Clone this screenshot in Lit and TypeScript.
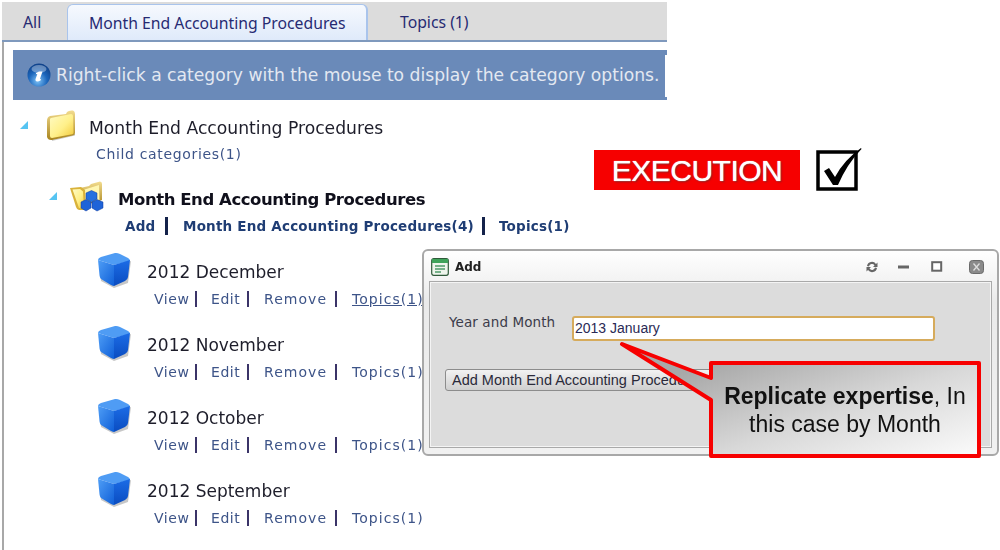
import { LitElement, html, css, svg } from "lit";
import { customElement } from "lit/decorators.js";

const defs = svg`<defs>
  <linearGradient id="cubeL" x1="0" y1="0" x2="1" y2="1"><stop offset="0" stop-color="#4f9ef6"/><stop offset="1" stop-color="#0f5fd8"/></linearGradient>
  <linearGradient id="cubeR" x1="0" y1="0" x2="0" y2="1"><stop offset="0" stop-color="#1c6ce6"/><stop offset="1" stop-color="#0a4cc0"/></linearGradient>
  <linearGradient id="fold" x1="0" y1="0" x2="1" y2="1"><stop offset="0" stop-color="#fffbc4"/><stop offset=".55" stop-color="#fff08a"/><stop offset="1" stop-color="#f2c93a"/></linearGradient>
  <linearGradient id="back" x1="0" y1="0" x2="0" y2="1"><stop offset="0" stop-color="#f3dc8e"/><stop offset="1" stop-color="#a8841e"/></linearGradient>
  <radialGradient id="orb" cx=".45" cy=".75" r=".8"><stop offset="0" stop-color="#7fc2f6"/><stop offset=".5" stop-color="#1b66bc"/><stop offset="1" stop-color="#0c3a80"/></radialGradient>
  <linearGradient id="call" gradientUnits="userSpaceOnUse" x1="96" y1="23" x2="154" y2="189"><stop offset="0" stop-color="#a8a8a8"/><stop offset=".5" stop-color="#d8d8d8"/><stop offset="1" stop-color="#fbfbfb"/></linearGradient>
</defs>`;

const cube = html`<svg class="cube" viewBox="0 0 36 36" width="36" height="36">${defs}
  <path d="M4 28 L17 35 L31 30 L34 8 L18 13 L2 9 Z" fill="#000" opacity=".22" transform="translate(1 1)"/>
  <path d="M2 8 Q2 6 5 5 L19 1 Q21 .5 24 2 L32 6 Q34 7 34 9 L18 13 Z" fill="#4f9cf4"/>
  <path d="M2 8 L18 13 L18 34 Q17 34 15 33 L5 27 Q4 26 3.6 24 Z" fill="url(#cubeL)"/>
  <path d="M18 13 L34 8 L32 25 Q32 27 29 29 L18 34 Z" fill="url(#cubeR)"/>
</svg>`;

const rows = ["2012 December", "2012 November", "2012 October", "2012 September"];

@customElement("app-root")
export class AppRoot extends LitElement {
  static styles = css`
    :host { display: block; width: 1000px; height: 550px; position: relative; overflow: hidden; background: #fff; font-family: "DejaVu Sans", sans-serif; }
    .soft { filter: blur(0.35px); width: 1000px; height: 550px; position: relative; }
    .panel { width: 665px; height: 548px; margin-left: 2px; padding-top: 2px; display: flex; flex-direction: column; }
    .tabs { display: flex; flex: none; height: 36px; background: #dcdcdc; border-bottom: 2px solid #7f99bd; padding-top: 2px; font-family: "Noto Sans", sans-serif; font-size: 15.75px; color: #262a72; }
    .tab { display: flex; align-items: center; height: 36px; }
    .all { width: 65px; padding-left: 21px; box-sizing: border-box; }
    .active { width: 301px; padding-left: 21px; box-sizing: border-box; background: linear-gradient(#f6f9fe, #dfeafa); border: 1px solid #a9c4ec; border-bottom: 0; border-right-width: 2px; border-radius: 6px 6px 0 0; }
    .topics { padding-left: 32px; }
    .body { flex: 1; border-left: 2px solid #a8a8a8; padding: 8px 0 0 9px; }
    .info { display: flex; align-items: center; gap: 5px; height: 50px; background: #6a8ab9; padding-left: 14px; box-sizing: border-box; color: #e3e8f1; font-size: 17.17px; white-space: nowrap; position: relative; overflow: hidden; }
    .info::after { content: ""; position: absolute; right: 0; top: 5px; bottom: 3px; width: 2px; background: #fff; }
    .tree { color: #1d1d2a; padding-top: 9px; }
    .row { display: flex; align-items: center; }
    .arrow { width: 0; height: 0; border-left: 8px solid transparent; border-bottom: 8px solid #56c4f2; }
    .root { padding-left: 7px; height: 32px; }
    .root .arrow { margin-right: 16px; }
    .root .title { margin-left: 13px; font-size: 17.2px; position: relative; top: 3px; }
    .sub { color: #3d5488; font-size: 14px; margin: 5px 0 0 83px; letter-spacing: .66px; }
    .cat { padding-left: 36px; height: 32px; margin-top: 18px; }
    .cat .arrow { margin-right: 12px; }
    .cat .title { margin-left: 13px; font-size: 16.5px; font-weight: 700; letter-spacing: -.44px; position: relative; top: 3px; color: #10101c; }
    .links { display: flex; align-items: center; font-size: 14px; color: #3d5488; line-height: 16px; letter-spacing: .55px; }
    .wide { letter-spacing: 1.05px; }
    .catlinks { margin: 5px 0 0 112px; font-weight: 700; color: #1f3d74; font-size: 13.5px; letter-spacing: .2px; }
    .bar { width: 2px; height: 16px; background: #3b3468; }
    .catlinks .bar { height: 18px; background: #14224a; width: 3px; }
    .items { padding-left: 83px; margin-top: 20px; }
    .item { height: 73px; }
    .item .row { height: 34px; }
    .item .title { margin-left: 15px; font-size: 17px; }
    .cube { display: block; margin-bottom: 4px; }
    .item .links { margin: 2px 0 0 58px; }
    .u { text-decoration: underline; }
    .exec { position: absolute; left: 594px; top: 150px; width: 206px; height: 40px; background: #f60000; color: #fff; font: 30px/42px "Liberation Sans", sans-serif; text-align: center; text-shadow: 0 0 1px #fff, 1px 1px 2px #7c2020; letter-spacing: -.5px; }
    .check { position: absolute; left: 815px; top: 147px; }
    .dialog { position: absolute; left: 422px; top: 249px; width: 577px; height: 207px; box-sizing: border-box; border: 2px solid #a8a8a8; border-radius: 6px; background: linear-gradient(#fff, #eaeaea 25%, #f1f1f1); padding: 0 5px 6px; display: flex; flex-direction: column; }
    .dhead { height: 30px; box-sizing: border-box; display: flex; align-items: center; flex: none; padding: 2px 0 0 2px; }
    .dtitle { font: 700 12px "DejaVu Sans", sans-serif; color: #222; margin-left: 6px; letter-spacing: -.1px; }
    .tools { margin-left: auto; display: flex; align-items: center; }
    .dbody { flex: 1; background: #dcdcdc; border: 1px solid #a9a9a9; box-shadow: inset 0 0 0 1px #f4f4f4; padding: 34px 0 0 19px; font-size: 13.5px; color: #3b3b4a; }
    .field { display: flex; align-items: flex-start; }
    .label { width: 123px; line-height: 14px; letter-spacing: .1px; margin-top: -1px; }
    .input { width: 363px; height: 25px; box-sizing: border-box; border: 2px solid #d6ab5c; border-radius: 3px; background: #fff; font: 14px/21px "Liberation Sans", sans-serif; color: #2a2a55; padding-left: 1px; }
    .btn { margin: 28px 0 0 -4px; width: 300px; height: 22px; box-sizing: border-box; border: 1px solid #8c8c8c; border-radius: 3px; background: linear-gradient(#f2f2f2, #cfcfcf); font: 14.5px/20px "Liberation Sans", sans-serif; color: #2a2a3a; padding-left: 6px; white-space: nowrap; overflow: hidden; }
    .callout { position: absolute; left: 615px; top: 340px; width: 385px; height: 125px; }
    .ctext { position: absolute; left: 94px; top: 21px; width: 272px; height: 97px; display: flex; align-items: center; justify-content: center; text-align: center; font: 23px/28px "Liberation Sans", sans-serif; color: #111; }
    .ctext b { font-weight: 700; }
  `;
  render() {
    return html`<div class="soft">
      <div class="panel">
        <div class="tabs">
          <div class="tab all">All</div>
          <div class="tab active">Month End Accounting Procedures</div>
          <div class="tab topics">Topics (1)</div>
        </div>
        <div class="body">
          <div class="info">
            <svg width="24" height="24" viewBox="0 0 24 24">${defs}
              <circle cx="12" cy="12" r="11.5" fill="url(#orb)"/>
              <ellipse cx="12" cy="6" rx="7.500" ry="4" fill="#fff" opacity=".35"/>
              <path d="M12 8.500h3.500l-2.400 7q-.3 1 .9.500l-.2 1.300q-4 2.200-5.200.3-.3-.5 0-1.500l1.700-5-1.500.2 .3-1.200Z" fill="#fff"/>
            </svg>
            <span>Right-click a category with the mouse to display the category options.</span>
          </div>
          <div class="tree">
            <div class="row root">
              <span class="arrow"></span>
              <svg width="32" height="32" viewBox="0 0 32 32">${defs}
                <path d="M3 12 Q3 8 6 7 L22 5 L23 3 Q25 1 29 1.500 Q31 2 31 5 L31 24 Q31 26 29 26.500 L8 31 Q4 31.500 3 28 Z" fill="url(#back)"/>
                <path d="M6 10 Q6 9 8 8.700 L27 5 Q29 5 29 7 L29.500 23.500 Q29.500 25 28 25.300 L8 29 Q6 29 6 27 Z" fill="url(#fold)"/>
                <path d="M8 31 L29 26.500 L31 25 L31 26.500 L8 32 Z" fill="#000" opacity=".2"/>
              </svg>
              <span class="title">Month End Accounting Procedures</span>
            </div>
            <div class="sub">Child categories(1)</div>
            <div class="row cat">
              <span class="arrow"></span>
              <svg width="36" height="32" viewBox="0 0 36 32">${defs}
                <path d="M11 8 L20 6 L22 4 L31 1.500 Q33 1.500 33 4 L33 20 L14 26 Z" fill="url(#back)"/>
                <path d="M14 10 L30 5 L30.500 20 L15 24 Z" fill="#fff6b0"/>
                <path d="M1 8 L12 7 L16 10 L17 30 L10 30 Q8 30 7 27 Z" fill="#d9b23a"/>
                <path d="M3.500 9.500 L11 9 L14 11.500 L15 28 L10 28 Z" fill="url(#fold)"/>
                <g stroke="#0c3a9c" stroke-width=".5">
                  <path d="M17 13 L22.500 10.500 L28 13 L28 19 L22.500 22 L17 19 Z" fill="#2470e0"/>
                  <path d="M12 22 L17 19.500 L22 22 L22 28 L17 31 L12 28 Z" fill="#1f63d8"/>
                  <path d="M23 22 L28 19.500 L34 22 L34 28 L28 31 L23 28 Z" fill="#1f63d8"/>
                </g>
              </svg>
              <span class="title">Month End Accounting Procedures</span>
            </div>
            <div class="links catlinks">
              <span style="width:40px">Add</span><span class="bar"></span>
              <span style="margin-left:15px;width:299px">Month End Accounting Procedures(4)</span><span class="bar"></span>
              <span style="margin-left:14px">Topics(1)</span>
            </div>
            <div class="items">
              ${rows.map((r, i) => html`<div class="item">
                <div class="row">${cube}<span class="title">${r}</span></div>
                <div class="links">
                  <span style="width:41px">View</span><span class="bar"></span>
                  <span style="margin-left:14px;width:28px">Edit</span><span class="bar" style="margin-left:8px"></span>
                  <span class="wide" style="margin-left:15px;width:62px">Remove</span><span class="bar" style="margin-left:9px"></span>
                  <span class="wide ${i === 0 ? "u" : ""}" style="margin-left:15px">Topics(1)</span>
                </div>
              </div>`)}
            </div>
          </div>
        </div>
      </div>

      <div class="exec">EXECUTION</div>
      <svg class="check" width="48" height="46" viewBox="0 0 48 46">
        <rect x="3" y="5" width="38" height="37" fill="#fff" stroke="#000" stroke-width="3.500"/>
        <path d="M9 24 L14 21 L20 30 Q29 13 46 1 L46.500 2 Q32 17 23 38 L18 38 Z" fill="#000"/>
      </svg>

      <div class="dialog">
        <div class="dhead">
          <svg width="18" height="18" viewBox="0 0 18 18">
            <rect x=".7" y=".7" width="16.600" height="16.600" rx="2" fill="#eef5ec" stroke="#2f5a3a" stroke-width="1.200"/>
            <rect x="1" y="1" width="16" height="4" fill="#3fa35a"/>
            <path d="M4 8h10M4 11h10M4 14h6" stroke="#4d9a68" stroke-width="1.400"/>
          </svg>
          <span class="dtitle">Add</span>
          <div class="tools">
            <svg width="14" height="14" viewBox="0 0 14 14" style="margin-right:19px"><path d="M2 6 A5 5 0 0 1 11 4 L12.500 2.500 L12.500 7 L8 7 L9.500 5.500 A3 3 0 0 0 4 6.500 Z M12 8 A5 5 0 0 1 3 10 L1.500 11.500 L1.500 7 L6 7 L4.500 8.500 A3 3 0 0 0 10 7.500 Z" fill="#666"/></svg>
            <svg width="12" height="12" viewBox="0 0 12 12" style="margin-right:21px"><rect x="0" y="4.500" width="11" height="3" fill="#666"/></svg>
            <svg width="12" height="12" viewBox="0 0 12 12" style="margin-right:26px"><rect x="1.200" y="1.200" width="9" height="8.500" fill="#fff" stroke="#666" stroke-width="2"/></svg>
            <svg width="15" height="14" viewBox="0 0 15 14" style="margin-right:8px"><rect x=".5" y=".5" width="14" height="13" rx="3" fill="#8a8a8a" stroke="#6a6a6a"/><path d="M4.500 3.500 L10.500 10.500 M10.500 3.500 L4.500 10.500" stroke="#ddd" stroke-width="1.300"/></svg>
          </div>
        </div>
        <div class="dbody">
          <div class="field"><span class="label">Year and Month</span><div class="input">2013 January</div></div>
          <div class="btn">Add Month End Accounting Procedure</div>
        </div>
      </div>

      <div class="callout">
        <svg width="385" height="125" viewBox="0 0 385 125">${defs}
          <path d="M96 23 L364 23 L364 116 L96 116 L96 60 L7 4 L96 38 Z" fill="url(#call)" stroke="#f70000" stroke-width="4" stroke-linejoin="round"/>
        </svg>
        <div class="ctext"><div><b>Replicate expertise</b>, In<br>this case by Month</div></div>
      </div>
    </div>`;
  }
}
